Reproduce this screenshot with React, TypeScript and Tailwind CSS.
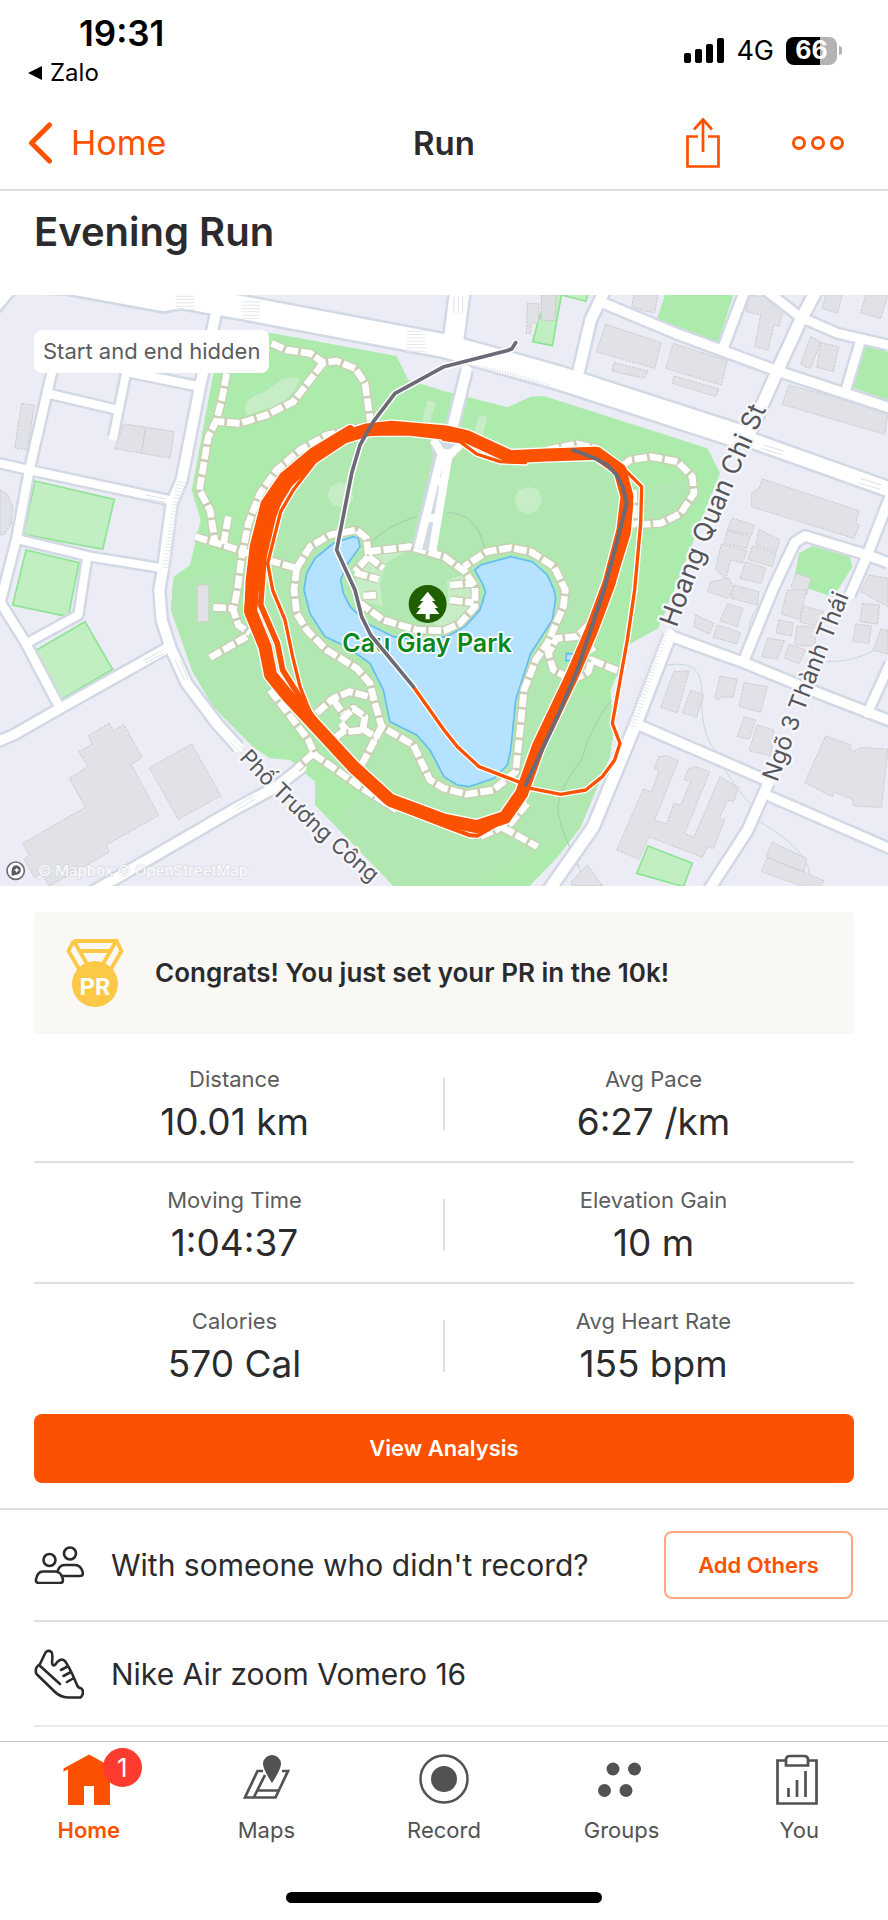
import type { ReactNode } from "react";

const ORANGE = "#fc5200";

/* ---------- Map data (map units: 2664 x 1773) ---------- */

const roads: [string, number][] = [
  ["380,-12 700,48 1332,167 1672,262 2232,443", 68],
  ["2232,443 2664,597", 42],
  ["1380,0 1358,170", 58],
  ["1400,240 1358,410", 30],
  ["-20,60 30,0", 30],
  ["650,60 600,290 545,570 515,640 490,830 478,900 485,990 512,1075 560,1180 650,1300 715,1372", 30],
  ["157,240 88,540 50,745 0,940", 26],
  ["380,240 340,440", 24],
  ["150,312 355,360", 24],
  ["380,245 600,290", 26],
  ["-10,518 88,540 515,632", 24],
  ["55,748 270,800 490,835", 24],
  ["262,800 235,975 80,1060", 24],
  ["-10,920 75,1055 180,1255", 26],
  ["-10,1356 40,1335 180,1255 500,1075", 28],
  ["270,1810 700,1560 830,1490 905,1432", 30],
  ["1815,0 1772,90 1737,240", 32],
  ["1812,40 2032,132 2332,243 2664,352", 28],
  ["2235,0 2167,180", 28],
  ["2450,0 2402,90 2332,243 2240,450", 34],
  ["2290,-5 2402,82 2512,130 2664,165", 26],
  ["2582,150 2540,292", 26],
  ["2232,1110 2320,895 2385,757 2415,738 2602,795 2664,818", 28],
  ["2670,620 2602,795 2550,915", 28],
  ["2012,1038 2232,1118 2462,1212 2680,1296", 28],
  ["2670,1120 2602,1270", 26],
  ["1905,1300 2302,1472", 28],
  ["2312,1520 2680,1680", 26],
  ["2305,1480 2242,1622 2120,1810", 30],
  ["2010,1035 1912,1290 1780,1610 1640,1810", 34],
];

const leftBuildings = [
  "65,340 103,346 82,480 44,474",
  "0,600 22,612 38,650 34,700 15,732 0,735",
  "372,402 437,412 425,490 343,476",
  "437,412 522,425 510,505 425,490",
  "328,1300 265,1337 277,1362 237,1385 263,1430 208,1465 256,1552 68,1660 88,1697 72,1708 103,1762 125,1750 148,1788 327,1687 318,1665 476,1576 394,1424 426,1402 372,1304 340,1322",
  "575,1362 663,1517 535,1588 448,1433",
  "592,885 626,885 626,995 592,995",
];

const upperRightBuildings = [
  "570,15 642,15 632,68 598,62 563,50",
  "485,103 652,158 632,235 457,185",
  "510,218 612,243 600,265 503,243",
  "688,160 850,212 832,285 665,235",
  "690,258 825,297 815,320 685,280",
  "910,15 960,20 1018,60 1005,108 990,105 972,180 932,170 950,75 908,65",
  "1145,15 1195,15 1180,70 1134,55",
  "1265,15 1332,15 1310,86 1250,68",
  "1100,140 1130,155 1100,235 1085,232 1070,222",
  "1130,158 1184,170 1168,245 1118,232",
  "1035,285 1332,365 1322,433 1014,343",
  "955,567 1245,662 1235,700 1247,705 1230,745 922,650 922,610 945,595",
  "865,685 932,705 922,735 850,720",
  "850,722 918,740 908,775 840,760",
  "832,762 908,782 895,820 860,810 845,868 815,835",
  "945,718 1008,750 998,785 935,765",
  "925,768 995,790 985,830 912,808",
  "905,815 965,835 952,880 888,865",
  "800,875 855,865 870,900 850,925 790,905",
  "870,885 945,905 940,945 860,925",
  "1058,850 1100,865 1088,915 1040,890",
  "1275,855 1332,865 1332,950 1250,905",
  "250,40 285,42 283,98 262,98 260,130 247,130",
];

const lowerRightBuildings = [
  "850,42 897,55 880,110 828,92",
  "755,75 810,100 795,132 750,110",
  "820,105 890,128 878,162 808,142",
  "1030,0 1088,0 1065,88 1012,72",
  "1078,48 1140,65 1110,108 1068,95",
  "1003,90 1048,98 1042,138 997,130",
  "1058,108 1115,112 1113,168 1053,165",
  "970,145 1022,152 1000,208 953,200",
  "1035,163 1085,180 1065,222 1022,205",
  "1255,40 1307,45 1300,102 1248,95",
  "1235,102 1282,108 1275,160 1227,155",
  "1310,118 1332,120 1332,192 1288,180",
  "690,245 735,242 700,368 650,352",
  "740,300 780,315 757,382 715,368",
  "828,258 880,268 867,322 830,320 825,330 812,325",
  "900,278 970,290 950,367 885,350",
  "900,380 935,390 915,447 880,440",
  "940,405 990,420 980,498 915,482",
  "1145,438 1220,465 1222,488 1250,472 1332,478 1312,652 1230,648 1225,628 1170,606 1165,620 1082,578",
  "645,500 672,497 703,512 632,690 668,702 690,640 710,645 740,575 720,570 733,537 755,530 797,545 722,730 750,742 828,560 883,592 870,632 850,632 826,685 842,690 808,775 790,770 775,802 615,740 585,808 518,780 598,597 622,605 645,545 630,535",
  "985,757 1088,805 1080,845 965,800",
  "970,803 1140,872 1130,890 1080,890 952,845",
  "430,825 475,887 385,887 382,875",
];

const paths = [
  "815,160 860,180 930,190 970,218 1010,213 1065,235 1095,280 1112,400",
  "970,218 930,270 880,335 800,375 720,400 655,395",
  "680,250 665,330 650,390 625,440 598,600 630,660 645,755",
  "585,740 670,765 730,785 820,815 890,835",
  "685,680 670,765",
  "1140,400 980,435 900,480 830,540 780,610 745,700 725,800 712,900 700,960 715,1005 750,1030",
  "640,952 700,955",
  "630,1103 740,1040",
  "810,1200 880,1290 925,1350 945,1395 1080,1490 1190,1560",
  "890,835 882,900 890,970 920,1020 980,1080 1070,1135 1110,1180 1125,1240 1145,1310 1240,1365 1290,1470 1332,1495 1400,1513 1480,1500 1547,1445 1562,1300 1572,1200 1607,1110 1642,1060 1690,950 1696,900 1662,830 1592,785 1532,773 1460,785 1392,830",
  "890,835 930,770 990,735 1070,720 1100,745 1105,800 1065,845",
  "1105,785 1230,770 1332,800 1395,845 1425,890 1425,950 1380,1000 1332,1022 1250,1020 1150,990 1080,940",
  "1065,848 1135,868",
  "1105,800 1150,835",
  "1350,885 1420,880",
  "1350,930 1420,938",
  "1090,918 1130,915",
  "950,1270 1000,1225 1050,1205 1125,1225",
  "1000,1230 1030,1270",
  "1025,1290 1060,1255 1095,1280 1088,1320 1045,1325 1022,1300",
  "1035,1320 990,1355",
  "1085,1315 1135,1345",
  "1145,1310 1085,1425",
  "940,1390 890,1435",
  "1765,1005 1730,1040 1670,1045 1645,1090 1660,1140 1720,1170 1765,1145 1775,1110 1860,1145",
  "1780,1085 1765,1060",
  "1865,530 1890,510 1952,500 2032,515 2077,560 2082,610 2042,670 1982,700 1900,705",
  "1900,600 1905,710",
  "1640,480 1732,462 1790,475",
  "1582,1540 1532,1600 1440,1640",
  "1507,1612 1612,1670",
];

const mainLoop =
  "1175,412 1100,420 1030,442 935,505 862,575 815,650 775,780 757,900 752,965 795,1070 812,1155 865,1220 935,1295 1060,1430 1170,1530 1332,1590 1430,1610 1515,1582 1565,1510 1615,1370 1715,1160 1775,1020 1827,880 1869,720 1881,620 1860,540 1790,490 1640,495 1530,500 1400,440 1332,425";

const strands: [string, number][] = [
  ["1340,445 1230,432 1100,432 1030,452 965,490 880,600 842,665 803,820 818,900 855,990 878,1100 900,1190 940,1290 1010,1375", 10],
  ["935,510 850,600 820,680 792,800 782,945 832,1060 848,1140 930,1270 1000,1365", 17],
  ["1050,418 940,485 850,560 795,640 762,770 750,870 746,960", 26],
  ["1020,1375 1170,1545 1210,1560 1332,1607 1410,1636 1432,1637 1500,1598", 12],
  ["1330,448 1380,455 1430,492 1500,515 1576,518", 10],
  ["1345,415 1425,450 1520,492 1640,487 1770,478 1840,520 1878,570 1893,640 1885,730 1845,860", 14],
  ["1865,530 1925,590 1922,700 1904,900 1882,1050 1837,1300 1860,1360 1844,1410 1807,1460 1757,1500 1682,1513 1592,1495 1567,1480 1437,1430 1372,1370 1332,1320 1240,1190", 10],
];

const hiddenTrack = "1547,158 1535,177 1520,182 1332,230 1185,310 1120,395 1080,465 1055,550 1010,780 1065,900 1085,980 1112,1035 1240,1190";
const lastTrack = "1720,480 1785,505 1822,525 1850,555 1868,590 1880,640 1850,760 1812,900 1732,1140 1672,1280 1577,1485";

function Line({ points, width, color, cap = "round", dash }: { points: string; width: number; color: string; cap?: "round" | "butt"; dash?: string }) {
  return (
    <polyline points={points} fill="none" stroke={color} strokeWidth={width} strokeLinejoin="round" strokeLinecap={cap} strokeDasharray={dash} />
  );
}

function Buildings({ shapes }: { shapes: string[] }) {
  return (
    <>
      {shapes.map((points) => (
        <polygon key={points} points={points} fill="#e1e2e8" stroke="#cfcbcb" strokeWidth="3" strokeDasharray="8 3" />
      ))}
    </>
  );
}

function RouteMap() {
  return (
    <svg viewBox="0 15 2664 1773" className="block h-auto w-full" role="img" aria-label="Route map around Cau Giay Park">
      <rect y="15" width="2664" height="1773" fill="#ebecf5" />

      {/* Park */}
      <polygon
        points="810,128 1190,198 1225,270 1332,303 1522,352 1592,320 1632,318 2122,475 2160,550 2022,900 1975,1015 1890,1062 1832,1200 1838,1350 1742,1612 1672,1702 1587,1790 1182,1790 945,1545 945,1475 870,1410 810,1405 760,1372 640,1250 578,1145 513,960 520,862 570,825 602,690 575,600 640,250"
        fill="#adebad"
      />
      <polygon
        points="1040,440 1300,445 1520,500 1790,490 1900,600 2060,560 2075,640 1990,700 1900,720 1830,880 1690,1190 1850,1250 1830,1400 1742,1612 1600,1700 1430,1790 1182,1788 1000,1600 1100,1490 940,1290 820,1080 790,900 830,680 900,540"
        fill="#b1e7b0"
      />
      <polygon points="513,960 520,870 700,840 720,1000 860,1270 900,1380 760,1370 640,1250 578,1145" fill="#b1e7b0" />
      <path d="M735 350q5-30 60-45l50-38q35-8 55 0q-20 50-65 80q-50 10-95 30z" fill="#c6edc6" />
      <polygon points="990,590 1020,575 1055,590 1060,630 1035,655 1000,645 983,620" fill="#c6edc6" />
      <polygon points="1555,600 1585,590 1615,600 1626,630 1612,660 1585,672 1555,660 1543,630" fill="#c6edc6" />
      <polygon points="1282,330 1308,338 1290,395 1265,395" fill="#c6edc6" />
      <polygon points="1438,375 1462,380 1445,445 1420,430" fill="#c6edc6" />
      <path d="M1110 760q50-55 140-80M1340 668q95 0 115 115M1835 1230q-60 70-90 180q-80 100-70 160q10 60 62 160" fill="none" stroke="#9dceab" strokeWidth="3" />

      {/* Other green areas */}
      <g fill="#c1efc2" stroke="#8fe394" strokeWidth="5">
        <polygon points="105,573 343,628 308,778 70,733" />
        <polygon points="78,780 237,818 205,980 38,945" />
        <polygon points="105,1083 255,995 338,1138 185,1228" />
        <polygon points="1944,1668 2077,1720 2050,1790 1910,1750" />
        <polygon points="1685,10 1657,167 1598,155 1617,85 1650,10" />
        <polyline points="1685,15 1758,34 1764,10" />
      </g>
      <g fill="#adebad">
        <polygon points="1995,15 2200,15 2154,160 1970,90" />
        <polygon points="2592,158 2664,185 2664,330 2550,290" />
        <polygon points="2397,790 2437,768 2550,800 2557,830 2500,922 2380,880" />
      </g>
      <polygon points="1624,15 1669,15 1665,92 1624,90" fill="#dcdee2" stroke="#cfcbcb" strokeWidth="3" />
      <path d="M1980 1130q120-30 125 60q-5 140 40 190q60 130 130 180M2260 1080q-40-70 30-150M2640 1070q-90 60-220 40M2270 1590q160 90 160 170M1720 1700l30 60" fill="none" stroke="#cbd8dd" strokeWidth="3" />

      <Buildings shapes={leftBuildings} />
      <g transform="translate(1332 0)">
        <Buildings shapes={upperRightBuildings} />
      </g>
      <g transform="translate(1332 900)">
        <Buildings shapes={lowerRightBuildings} />
      </g>

      {/* Streets */}
      {roads.map(([points, width]) => (
        <Line key={points} points={points} width={width + 15} color="#d2d9e4" cap="butt" />
      ))}
      <polygon points="110,10 700,10 700,85 630,74 545,58 490,68 200,15" fill="#ffffff" stroke="#d2d9e4" strokeWidth="8" />
      {roads.map(([points, width]) => (
        <Line key={points} points={points} width={width} color="#ffffff" />
      ))}

      {/* Crossings */}
      <g stroke="#e6e8ef">
        <path d="M555 17v42M752 34v54M1248 122v64" strokeDasharray="3 7" strokeWidth="56" />
        <path d="M545 575L500 835" strokeDasharray="3 7" strokeWidth="30" />
        <path d="M1990 1020L1890 1310" strokeDasharray="3 7" strokeWidth="34" />
      </g>
      <g fill="none" stroke="#dfe1ea" strokeWidth="3">
        <path d="M438 615l60 12M440 625l55 12M430 1112l60-32M435 1120l60-32M525 1110l28 60M540 1110l25 60M705 1550l55-32M710 1560l55-32M690 1355l35 35M700 1350l35 32" />
        <path d="M2290 465l60 18M2285 476l60 18M2580 565l65 20M2575 578l65 20M1362 20v50M1375 20v50M1388 20v50M2635 660l-20 50" />
        <path d="M1420 230q120 20 230 60" strokeWidth="12" strokeDasharray="3 5" />
      </g>

      {/* Lake */}
      <polygon
        points="1060,740 1075,745 1080,770 1040,825 1022,870 1030,910 1050,950 1110,1005 1180,1040 1260,1050 1340,1040 1395,1010 1440,960 1457,905 1447,880 1424,840 1442,825 1532,800 1597,815 1642,855 1662,900 1667,925 1657,990 1592,1090 1547,1230 1532,1380 1522,1425 1482,1465 1407,1490 1372,1485 1332,1460 1290,1380 1250,1335 1170,1295 1150,1200 1110,1120 1040,1070 975,1040 930,970 912,900 920,850 945,805 1000,760"
        fill="#b5e3ff"
        stroke="#62bdf7"
        strokeWidth="5"
      />
      <polygon points="1700,1090 1722,1092 1718,1112 1697,1112" fill="#b5e3ff" stroke="#62bdf7" strokeWidth="5" />
      <polygon points="1105,800 1230,775 1160,820 1140,880 1150,950 1080,930 1065,850" fill="#c6edc6" />
      <polygon points="1290,990 1345,920 1340,870 1400,850 1425,890 1425,950 1380,1000 1332,1022" fill="#c6edc6" />

      {/* Foot paths */}
      {paths.map((points) => (
        <Line key={points} points={points} width={28} color="#c9cfb4" cap="butt" />
      ))}
      {paths.map((points) => (
        <Line key={points} points={points} width={20} color="#ffffff" cap="butt" dash="38 8" />
      ))}
      <polygon points="1290,450 1340,400 1395,450 1350,520 1290,785 1235,770 1300,500" fill="#d2d9e4" />
      <g fill="none" stroke="#ffffff" strokeWidth="24">
        <path d="M1300 450L1325 490L1255 775M1385 460L1345 500L1297 785M1325 490h25M1300 575h35M1275 685h35" />
      </g>

      {/* Place labels */}
      <g fontFamily="Inter, sans-serif" fill="#55565c" stroke="#f7f7fb" strokeWidth="14" strokeLinejoin="round" paintOrder="stroke" fontSize="71">
        <path id="street-hoang" d="M2030 1015Q2125 745 2330 290" fill="none" stroke="none" />
        <path id="street-ngo" d="M2332 1478Q2430 1210 2590 810" fill="none" stroke="none" />
        <path id="street-pho" d="M716 1405Q930 1635 1200 1850" fill="none" stroke="none" />
        <text fontSize="79"><textPath href="#street-hoang">Hoang Quan Chi St</textPath></text>
        <text><textPath href="#street-ngo">Ngõ 3 Thành Thái</textPath></text>
        <text fontSize="66"><textPath href="#street-pho">Phố Trương Công</textPath></text>
      </g>
      <circle cx="1283" cy="942" r="57" fill="#205f00" />
      <path d="M1283 905l-23 28h10l-18 21h10l-14 18h29v16h12v-16h29l-14-18h10l-18-21h10z" fill="#ffffff" />
      <text x="1281" y="1085" textAnchor="middle" fontFamily="Inter, sans-serif" fontWeight="600" fontSize="75" fill="#0a871c" stroke="#ffffff" strokeWidth="10" strokeLinejoin="round" paintOrder="stroke">
        Cau Giay Park
      </text>

      {/* Recorded track */}
      <Line points={hiddenTrack} width={20} color="#ffffff" />
      {strands.map(([points, width]) => (
        <Line key={points} points={points} width={width + 8} color="#ffffff" />
      ))}
      <Line points={mainLoop + " 1175,412"} width={47} color="#ffffff" />
      {strands.map(([points, width]) => (
        <Line key={points} points={points} width={width} color={ORANGE} />
      ))}
      <Line points={mainLoop + " 1175,412"} width={39} color={ORANGE} />
      <Line points={hiddenTrack} width={11} color="#6c6a77" />
      <Line points={lastTrack} width={12} color="#6c6a77" />

      {/* Attribution */}
      <circle cx="47" cy="1742" r="26" fill="#ffffff" stroke="#6b6d74" strokeWidth="5" />
      <path d="M35 1757q-3-32 14-31a14 14 0 1 1-1 28q-8 3-13 3zM50 1733l3 5 5 2-5 3-3 5-3-5-5-3 5-2z" fill="#5a5c63" fillRule="evenodd" />
      <text x="113" y="1757" fontFamily="Inter, sans-serif" fontWeight="500" fontSize="45" fill="#ffffff" fillOpacity="0.85" stroke="#c9cad3" strokeOpacity="0.5" strokeWidth="4" paintOrder="stroke">
        © Mapbox © OpenStreetMap
      </text>
    </svg>
  );
}

/* ---------- Bars ---------- */

function StatusBar() {
  return (
    <div className="flex items-center justify-between pt-3 pr-[46px] pl-7 text-black">
      <div>
        <div className="pt-[1px] pl-[51px] text-[35px] leading-10 font-semibold">19:31</div>
        <button type="button" className="mt-1 flex items-center gap-2 text-[24px] leading-8">
          <svg viewBox="0 0 14 14" className="size-[14px]" fill="currentColor" aria-hidden="true">
            <path d="M0 7L14 0V14z" />
          </svg>
          Zalo
        </button>
      </div>
      <div className="flex items-center gap-3">
        <svg viewBox="0 0 40 25" className="h-[25px] w-10" fill="currentColor" role="img" aria-label="Signal">
          <rect y="15" width="7" height="10" rx="2" />
          <rect x="11" y="11" width="7" height="14" rx="2" />
          <rect x="22" y="6" width="7" height="19" rx="2" />
          <rect x="33" width="7" height="25" rx="2" />
        </svg>
        <span className="text-[27px] leading-8">4G</span>
        <div className="flex items-center gap-[2px]">
          <div className="flex h-7 w-[51px] items-center justify-center rounded-lg bg-linear-to-r from-black from-66% to-[#b3b3b3] to-66% text-[25px] font-bold text-white">66</div>
          <div className="h-[9px] w-[3px] rounded-r-full bg-[#b3b3b3]" />
        </div>
      </div>
    </div>
  );
}

function NavBar() {
  return (
    <header className="flex h-[102px] items-center border-b-2 border-[#dfdfdf] pt-2 pr-[43px] pl-7">
      <a href="#home" className="flex flex-1 items-center gap-[19px] text-[34px] leading-10 text-[#fc5200]">
        <svg viewBox="0 0 24 42" className="h-[42px] w-6" fill="none" stroke="currentColor" strokeWidth="5" strokeLinecap="round" strokeLinejoin="round" aria-hidden="true">
          <path d="M21.500 3L3.500 21L21.500 39" />
        </svg>
        Home
      </a>
      <span className="pl-[15px] text-center text-[33px] leading-10 font-semibold">Run</span>
      <div className="flex flex-1 items-center justify-end gap-[71px] text-[#fc5200]">
        <button type="button" aria-label="Share">
          <svg viewBox="0 0 34 52" className="h-[52px] w-[34px]" fill="none" stroke="currentColor" strokeWidth="2.700">
            <path d="M12 19.500H1.500V49.500H32.500V19.500H22M17 35V3M8 12.500L17 2.500L26 12.500" />
          </svg>
        </button>
        <button type="button" aria-label="More options">
          <svg viewBox="0 0 54 16" className="h-4 w-[54px]" fill="none" stroke="currentColor" strokeWidth="3">
            <circle cx="8" cy="8" r="5.500" />
            <circle cx="27" cy="8" r="5.500" />
            <circle cx="46" cy="8" r="5.500" />
          </svg>
        </button>
      </div>
    </header>
  );
}

/* ---------- Content ---------- */

function MedalIcon() {
  return (
    <svg viewBox="0 0 58 68" className="h-[68px] w-[58px] shrink-0" role="img" aria-label="Personal record">
      <path d="M7.500 2H50.500L55.500 12L45 30M7.500 2L2.500 12L13 30M8.500 3L21 25M49.500 3L37 25M14 12H44" fill="none" stroke="#fcc846" strokeWidth="3.800" />
      <circle cx="29" cy="45" r="23" fill="#fcc846" />
      <text x="29" y="56" textAnchor="middle" fontFamily="Roboto, sans-serif" fontWeight="700" fontSize="24" fill="#ffffff">PR</text>
    </svg>
  );
}

const stats = [
  [["Distance", "10.01 km"], ["Avg Pace", "6:27 /km"]],
  [["Moving Time", "1:04:37"], ["Elevation Gain", "10 m"]],
  [["Calories", "570 Cal"], ["Avg Heart Rate", "155 bpm"]],
];

function Stat({ label, value }: { label: string; value: string }) {
  return (
    <div className="flex flex-1 flex-col items-center gap-1">
      <dt className="text-[22px] leading-8 text-[#5c5c5e]">{label}</dt>
      <dd className="text-[37px] leading-[46px]">{value}</dd>
    </div>
  );
}

function Stats() {
  return (
    <dl className="mx-[34px] mt-2">
      {stats.map(([left, right], i) => (
        <div key={left[0]} className={`flex h-[121px] items-center gap-2 border-b-2 pt-1 ${i < 2 ? "border-[#dfdfe4]" : "border-transparent"}`}>
          <Stat label={left[0]} value={left[1]} />
          <div className="h-[52px] w-[2px] bg-[#dfdfe1]" />
          <Stat label={right[0]} value={right[1]} />
        </div>
      ))}
    </dl>
  );
}

function PeopleIcon() {
  return (
    <svg viewBox="0 0 50 38" className="h-[38px] w-[50px] shrink-0" fill="none" stroke="#2b2b2d" strokeWidth="2.600" strokeLinejoin="round" strokeLinecap="round" aria-hidden="true">
      <circle cx="15.500" cy="14" r="6" />
      <circle cx="36" cy="7.500" r="6" />
      <path d="M9 25.500H21Q27.500 25.500 29 34Q29 37 26 37H5Q1.500 37 2 33.500Q3.500 25.500 9 25.500zM24 24Q26 19 31 19H41Q47 19 49 27Q49 30 46 30H29" />
    </svg>
  );
}

function ShoeIcon() {
  return (
    <svg viewBox="0 0 50 50" className="size-[50px] shrink-0" fill="none" stroke="#2b2b2d" strokeWidth="2.600" strokeLinejoin="round" strokeLinecap="round" aria-hidden="true">
      <path d="M6 15L11.500 3.500Q14 .500 17.500 3Q19 5 18 13Q18.500 17.500 21 16Q26 8 31 12Q35 18 38.500 25.500L43 36Q44 39 47.500 39.500Q51 44 46.500 48.500H34Q26 48 21 43L2.500 25Q0 19 6 15zM5 16L26 35M27 21L33.500 17.500M29.500 27L36 23.500M33 33L39 29.500" />
    </svg>
  );
}

/* ---------- Tab bar ---------- */

const tabs: { label: string; icon: ReactNode; active?: boolean; badge?: number }[] = [
  {
    label: "Home",
    active: true,
    badge: 1,
    icon: <path d="M26 .500L51.500 14.500V17.500L47 15.500V51H31V32H21V51H5V15.500L.500 17.500V14.500z" fill="currentColor" />,
  },
  {
    label: "Maps",
    icon: (
      <>
        <path d="M23 17H17.500L5 43.500H35.500L48 17H42M25 21L14 43M18 36.500H38" fill="none" stroke="currentColor" strokeWidth="2.700" />
        <path d="M32 1a9 9 0 0 1 9 9.500Q40 17 32 29Q24 17 23 10.500A9 9 0 0 1 32 1z" fill="currentColor" />
      </>
    ),
  },
  {
    label: "Record",
    icon: (
      <>
        <circle cx="26" cy="25" r="23.500" fill="none" stroke="currentColor" strokeWidth="2.500" />
        <circle cx="26" cy="25" r="13" fill="currentColor" />
      </>
    ),
  },
  {
    label: "Groups",
    icon: (
      <g fill="currentColor">
        <circle cx="17" cy="15" r="6.500" />
        <circle cx="38.500" cy="15" r="6.500" />
        <circle cx="8.500" cy="36.500" r="6.500" />
        <circle cx="30" cy="36.500" r="6.500" />
      </g>
    ),
  },
  {
    label: "You",
    icon: (
      <g fill="none" stroke="currentColor" strokeWidth="2.700">
        <path d="M13 6.500H4.500V49.500H43.500V6.500H35M15.500 34V43M24 26V43M32.500 17V43" />
        <path d="M13 11.500V5Q13.500 2 17 2H31Q34.500 2 35 5V11.500z" />
      </g>
    ),
  },
];

function TabBar() {
  return (
    <nav className="mt-[14px] border-t border-[#c6c6c8]">
      <ul className="grid grid-cols-5 pt-3">
        {tabs.map((tab) => (
          <li key={tab.label}>
            <a href={`#${tab.label.toLowerCase()}`} className={`flex flex-col items-center gap-2 leading-8 ${tab.active ? "text-[22px] font-semibold text-[#fc5200]" : "text-[22px] text-[#525254]"}`}>
              <span className="relative">
                <svg viewBox="0 0 52 52" className="size-[52px]" aria-hidden="true">{tab.icon}</svg>
                {tab.badge && (
                  <span className="absolute -top-[6px] -right-[27px] flex size-[39px] items-center justify-center rounded-full bg-[#ff3b30] text-[26px] font-normal text-white">{tab.badge}</span>
                )}
              </span>
              {tab.label}
            </a>
          </li>
        ))}
      </ul>
      <div className="mx-auto mt-[46px] mb-[17px] h-[11px] w-[316px] rounded-full bg-black" />
    </nav>
  );
}

export default function App() {
  return (
    <div className="min-h-screen bg-white font-['Inter',sans-serif] text-[#2b2b2d]">
      <StatusBar />
      <NavBar />
      <main>
        <h1 className="px-[34px] pt-[17px] pb-[39px] text-[40px] leading-[48px] font-semibold">Evening Run</h1>
        <div className="relative">
          <RouteMap />
          <div className="absolute top-[35px] left-[34px] rounded-lg bg-white px-[9px] text-[22px] leading-[43px] text-[#5c5c5e]">Start and end hidden</div>
        </div>
        <div className="mx-[34px] mt-[26px] flex h-[122px] items-center gap-[31px] rounded-[4px] bg-[#f9f8f5] px-8 text-[26px] leading-9 font-semibold">
          <MedalIcon />
          <p>Congrats! You just set your PR in the 10k!</p>
        </div>
        <Stats />
        <div className="mt-[9px] px-[34px]">
          <button type="button" className="h-[69px] w-full rounded-lg bg-[#fc5200] text-[22px] font-semibold text-white">View Analysis</button>
        </div>
        <section className="mt-[25px] border-t-2 border-[#dfdfdf]">
          <div className="ml-[34px] flex h-[112px] items-center gap-[27px] border-b-2 border-[#dfdfdf] pr-[35px] text-[30px] leading-10">
            <PeopleIcon />
            <p className="flex-1">With someone who didn't record?</p>
            <button type="button" className="h-[68px] w-[189px] rounded-lg border-2 border-[#fca77f] text-[22px] font-semibold text-[#fc5200]">Add Others</button>
          </div>
          <div className="ml-[34px] flex h-[105px] items-center gap-[27px] border-b-2 border-[#e9e9e9] text-[30px] leading-10">
            <ShoeIcon />
            <p>Nike Air zoom Vomero 16</p>
          </div>
        </section>
      </main>
      <TabBar />
    </div>
  );
}
